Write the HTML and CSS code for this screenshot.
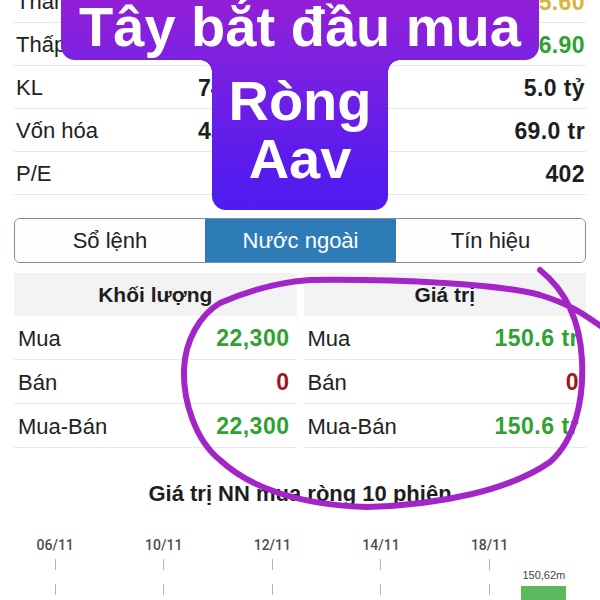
FILE: index.html
```html
<!DOCTYPE html>
<html lang="vi">
<head>
<meta charset="utf-8">
<title>Nước ngoài</title>
<link rel="stylesheet" href="styles.css">
</head>
<body>
<div class="screen">
  <div class="info">
    <div class="irow"><span class="lbl">Tham chiếu</span><span class="mid">6.20</span><span class="val ref">5.60</span></div>
    <div class="irow"><span class="lbl">Thấp nhất</span><span class="mid">6.10</span><span class="val up">6.90</span></div>
    <div class="irow"><span class="lbl">KL</span><span class="mid">74,300</span><span class="val">5.0 tỷ</span></div>
    <div class="irow"><span class="lbl">Vốn hóa</span><span class="mid">457.1 tỷ</span><span class="val">69.0 tr</span></div>
    <div class="irow"><span class="lbl">P/E</span><span class="mid"></span><span class="val">402</span></div>
  </div>

  <div class="tabs">
    <div class="tab">Sổ lệnh</div>
    <div class="tab active">Nước ngoài</div>
    <div class="tab">Tín hiệu</div>
  </div>

  <div class="foreign">
    <div class="fcol">
      <div class="fhead">Khối lượng</div>
      <div class="frow"><span>Mua</span><b class="up">22,300</b></div>
      <div class="frow"><span>Bán</span><b class="down">0</b></div>
      <div class="frow"><span>Mua-Bán</span><b class="up">22,300</b></div>
    </div>
    <div class="fcol">
      <div class="fhead">Giá trị</div>
      <div class="frow"><span>Mua</span><b class="up">150.6 tr</b></div>
      <div class="frow"><span>Bán</span><b class="down">0</b></div>
      <div class="frow"><span>Mua-Bán</span><b class="up">150.6 tr</b></div>
    </div>
  </div>

  <h2 class="ctitle">Giá trị NN mua ròng 10 phiên</h2>

  <div class="chart">
    <div class="slot"><span class="date">06/11</span><div class="plot"></div></div>
    <div class="slot"><span class="date"></span><div class="plot blank"></div></div>
    <div class="slot"><span class="date">10/11</span><div class="plot"></div></div>
    <div class="slot"><span class="date"></span><div class="plot blank"></div></div>
    <div class="slot"><span class="date">12/11</span><div class="plot"></div></div>
    <div class="slot"><span class="date"></span><div class="plot blank"></div></div>
    <div class="slot"><span class="date">14/11</span><div class="plot"></div></div>
    <div class="slot"><span class="date"></span><div class="plot blank"></div></div>
    <div class="slot"><span class="date">18/11</span><div class="plot"></div></div>
    <div class="slot"><span class="date"></span><div class="plot barplot"><span class="blabel">150,62m</span><div class="bar"></div></div></div>
  </div>
</div>

<div class="caption">
  <div class="cap-wide">Tây bắt đầu mua</div>
  <div class="cap-narrow">Ròng<br>Aav</div>
</div>

<svg class="scribble" viewBox="0 0 600 600" width="600" height="600" aria-hidden="true">
  <path d="M540 270 C565 290 580 320 582 360 C584 400 575 440 550 462 C510 490 440 505 367 507 C300 505 250 488 220 460 C195 440 183 400 184 370 C185 340 200 315 220 303 C250 290 280 282 310 280 C400 279 500 284 540 295 C570 304 585 315 602 327" fill="none" stroke="#a325c8" stroke-width="6" stroke-linecap="round" stroke-linejoin="round"/>
</svg>
</body>
</html>
```

FILE: styles.css
```css
html, body {
  margin: 0;
  padding: 0;
  width: 600px;
  height: 600px;
  overflow: hidden;
  background: #ffffff;
}

body {
  position: relative;
  font-family: "Liberation Sans", Arial, sans-serif;
  color: #222222;
}

.screen {
  padding: 0 14px;
}

/* summary rows */
.info {
  margin-top: -20px;
}

.irow {
  display: grid;
  grid-template-columns: 182px 1fr auto;
  align-items: center;
  height: 40px;
  border-bottom: 1px solid #e8e8e8;
  padding: 2px 0 0 2px;
}

.lbl {
  font-size: 22px;
  color: #222;
}

.mid {
  font-size: 23px;
  font-weight: 700;
  color: #1e1e1e;
}

.val {
  font-size: 23px;
  font-weight: 700;
  color: #1e1e1e;
  padding-right: 1px;
  letter-spacing: 0.4px;
}

.val.ref {
  color: #d8b63c;
}

.up {
  color: #2fa22f;
}

.down {
  color: #a3161b;
}

/* segmented tabs */
.tabs {
  display: grid;
  grid-template-columns: repeat(3, 1fr);
  height: 43px;
  margin-top: 23px;
  border: 1px solid #7f8e9a;
  border-radius: 6px;
  overflow: hidden;
}

.tab {
  display: flex;
  align-items: center;
  justify-content: center;
  font-size: 22px;
  color: #222;
  background: #fdfdfd;
}

.tab + .tab {
  border-left: 1px solid #7f8e9a;
}

.tab.active {
  background: #2d7cb8;
  color: #ffffff;
  border-left-color: #2d7cb8;
}

.tab.active + .tab {
  border-left-color: #2d7cb8;
}

/* foreign trading table */
.foreign {
  display: grid;
  grid-template-columns: 1fr 1fr;
  column-gap: 7px;
  margin-top: 10px;
}

.fhead {
  height: 43px;
  display: flex;
  align-items: center;
  justify-content: center;
  background: #f3f3f3;
  font-size: 21px;
  font-weight: 700;
  color: #1e1e1e;
}

.frow {
  height: 41px;
  display: flex;
  align-items: center;
  justify-content: space-between;
  padding: 2px 7px 0 4px;
  border-bottom: 1px solid #e9e9e9;
  font-size: 22px;
}

.frow b {
  font-size: 23px;
  letter-spacing: 0.5px;
}

/* chart */
.ctitle {
  margin: 33px 0 0;
  text-align: center;
  font-size: 22px;
  line-height: 26px;
  font-weight: 700;
  color: #1e1e1e;
}

.chart {
  display: grid;
  grid-template-columns: repeat(10, 1fr);
  margin: 30px 15px 0 14px;
}

.slot {
  display: flex;
  flex-direction: column;
  align-items: center;
}

.date {
  height: 16px;
  line-height: 16px;
  font-family: Roboto, "Liberation Sans", sans-serif;
  font-weight: 500;
  font-size: 14px;
  color: #4d4d4d;
}

.plot {
  align-self: stretch;
  height: 47px;
  background: linear-gradient(to bottom, #b5b5b5 0, #b5b5b5 11px, transparent 11px) center 6px / 1px 25px repeat-y;
}

.plot.blank {
  background: none;
}

.plot.barplot {
  background: none;
  display: flex;
  flex-direction: column;
  align-items: center;
  padding-top: 16px;
  box-sizing: border-box;
  overflow: hidden;
}

.blabel {
  font-size: 11px;
  line-height: 12px;
  color: #444;
}

.bar {
  width: 45px;
  height: 40px;
  flex: none;
  margin-top: 5px;
  background: #5cb85c;
}

/* caption overlay */
.caption {
  position: absolute;
  top: -20px;
  left: 0;
  width: 600px;
  display: flex;
  flex-direction: column;
  align-items: center;
  color: #ffffff;
  font-family: "Liberation Sans", Arial, sans-serif;
  font-weight: 700;
  font-size: 56px;
  line-height: 58px;
  text-align: center;
}

.cap-wide,
.cap-narrow {
  background: linear-gradient(180deg, #931fd6 0px, #7c21e1 60px, #5a1cec 160px, #4f1bf2 212px, #4f1bf2 600px);
  background-attachment: fixed;
}

.cap-wide {
  width: 478px;
  padding: 18px 0 4px;
  border-radius: 14px;
}

.cap-narrow {
  position: relative;
  width: 176px;
  padding: 12px 0 22px;
  border-radius: 0 0 14px 14px;
}

.cap-narrow::before,
.cap-narrow::after {
  content: "";
  position: absolute;
  top: 0;
  width: 12px;
  height: 12px;
}

.cap-narrow::before {
  left: -12px;
  background: radial-gradient(circle at 0 100%, transparent 11.5px, #7b21e1 12px);
}

.cap-narrow::after {
  right: -12px;
  background: radial-gradient(circle at 100% 100%, transparent 11.5px, #7b21e1 12px);
}

/* hand-drawn circle annotation */
.scribble {
  position: absolute;
  top: 0;
  left: 0;
  pointer-events: none;
}
```
